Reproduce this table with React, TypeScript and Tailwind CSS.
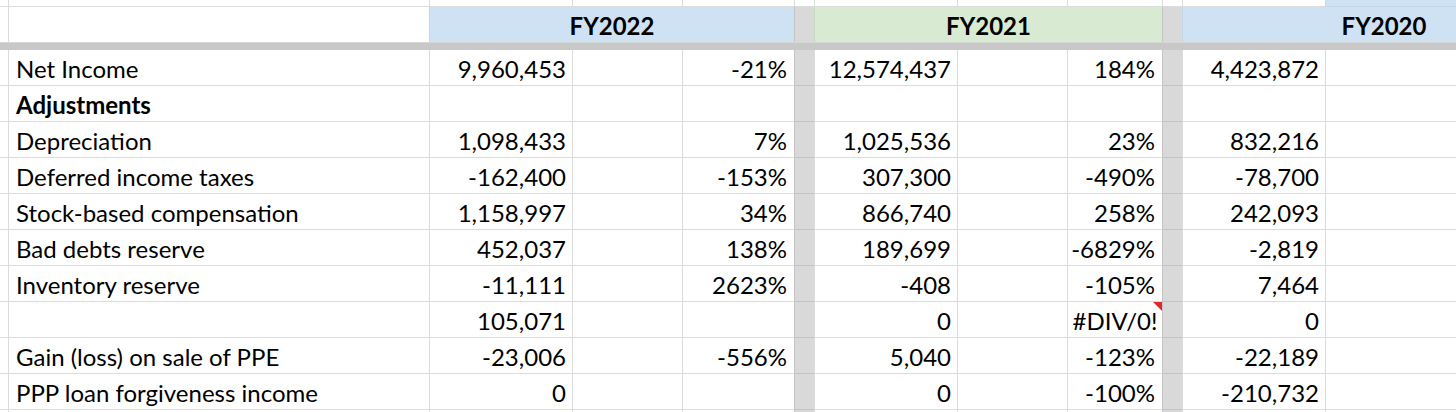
import React from 'react';

// column template shared by every row of the sheet
const GRID =
  'grid grid-cols-[8px_421px_143px_110px_112px_20px_143px_110px_95px_20px_143px_131px]';

type Row = {
  label: string;
  bold?: boolean;
  fy22: string;
  fy22pct: string;
  fy21: string;
  fy21pct: string;
  fy20: string;
  comment?: boolean;
};

const rows: Row[] = [
  { label: 'Net Income', fy22: '9,960,453', fy22pct: '-21%', fy21: '12,574,437', fy21pct: '184%', fy20: '4,423,872' },
  { label: 'Adjustments', bold: true, fy22: '', fy22pct: '', fy21: '', fy21pct: '', fy20: '' },
  { label: 'Depreciation', fy22: '1,098,433', fy22pct: '7%', fy21: '1,025,536', fy21pct: '23%', fy20: '832,216' },
  { label: 'Deferred income taxes', fy22: '-162,400', fy22pct: '-153%', fy21: '307,300', fy21pct: '-490%', fy20: '-78,700' },
  { label: 'Stock-based compensation', fy22: '1,158,997', fy22pct: '34%', fy21: '866,740', fy21pct: '258%', fy20: '242,093' },
  { label: 'Bad debts reserve', fy22: '452,037', fy22pct: '138%', fy21: '189,699', fy21pct: '-6829%', fy20: '-2,819' },
  { label: 'Inventory reserve', fy22: '-11,111', fy22pct: '2623%', fy21: '-408', fy21pct: '-105%', fy20: '7,464' },
  { label: '', fy22: '105,071', fy22pct: '', fy21: '0', fy21pct: '#DIV/0!', fy20: '0', comment: true },
  { label: 'Gain (loss) on sale of PPE', fy22: '-23,006', fy22pct: '-556%', fy21: '5,040', fy21pct: '-123%', fy20: '-22,189' },
  { label: 'PPP loan forgiveness income', fy22: '0', fy22pct: '', fy21: '0', fy21pct: '-100%', fy20: '-210,732' },
  { label: '', fy22: '', fy22pct: '', fy21: '', fy21pct: '', fy20: '' },
];

const Cell = ({ children, className = '' }: { children?: React.ReactNode; className?: string }) => (
  <div
    className={`relative h-[36px] overflow-visible whitespace-nowrap border-b border-l border-[#dcdcdc] pt-[3px] leading-[32px] ${className}`}
  >
    {children}
  </div>
);

const Spacer = () => <div className="h-[36px] border-b border-l border-[#c4c4c4] bg-[#d9d9d9]" />;

export default function App() {
  return (
    <div
      className="h-[412px] w-[1456px] overflow-hidden bg-white text-[24px] text-black"
      style={{ fontFamily: 'Lato, "Open Sans", sans-serif' }}
    >
      {/* tail of the row above */}
      <div className={`${GRID} h-[7px]`}>
        <div className="border-b border-[#dcdcdc]" />
        <div className="border-b border-l border-[#dcdcdc]" />
        <div className="border-b border-l border-[#dcdcdc]" />
        <div className="border-b border-l border-[#dcdcdc]" />
        <div className="border-b border-l border-[#dcdcdc]" />
        <div className="border-b border-l border-[#dcdcdc]" />
        <div className="border-b border-l border-[#dcdcdc]" />
        <div className="border-b border-l border-[#dcdcdc]" />
        <div className="border-b border-l border-[#dcdcdc]" />
        <div className="border-b border-l border-[#dcdcdc]" />
        <div className="border-b border-l border-[#dcdcdc]" />
        <div className="border-b border-l border-[#c5d6e8] bg-[#cfe2f3]" />
      </div>

      {/* fiscal year headers */}
      <div className={`${GRID} h-[35px] font-bold`}>
        <div />
        <div className="border-l border-[#dcdcdc]" />
        <div className="col-span-3 border-l border-[#c5d6e8] bg-[#cfe2f3] pt-[3px] text-center leading-[32px]">
          FY2022
        </div>
        <div className="border-l border-[#c4c4c4] bg-[#d9d9d9]" />
        <div className="col-span-3 border-l border-[#cadbc4] bg-[#d9ead3] pt-[3px] text-center leading-[32px]">
          FY2021
        </div>
        <div className="border-l border-[#c4c4c4] bg-[#d9d9d9]" />
        <div className="col-span-2 border-l border-[#c5d6e8] bg-[#cfe2f3] pl-[129px] pt-[3px] text-center leading-[32px]">
          FY2020
        </div>
      </div>

      {/* frozen pane divider */}
      <div className="h-[8px] border-t border-[#d6d6d6] bg-[#c8c8c8]" />

      {rows.map((r, i) => (
        <div key={`row_${i}`} className={GRID}>
          <Cell className="border-l-0" />
          <Cell className={`pl-[7px] ${r.bold ? 'font-bold' : ''}`}>{r.label}</Cell>
          <Cell className="pr-[6px] text-right">{r.fy22}</Cell>
          <Cell />
          <Cell className="pr-[7px] text-right">{r.fy22pct}</Cell>
          <Spacer />
          <Cell className="pr-[6px] text-right">{r.fy21}</Cell>
          <Cell />
          <Cell className={r.comment ? 'text-center' : 'pr-[7px] text-right'}>
            {r.fy21pct}
            {r.comment && (
              <span className="absolute right-0 top-0 h-0 w-0 border-l-[9px] border-t-[9px] border-l-transparent border-t-[#e3262b]" />
            )}
          </Cell>
          <Spacer />
          <Cell className="pr-[6px] text-right">{r.fy20}</Cell>
          <Cell />
        </div>
      ))}
    </div>
  );
}
